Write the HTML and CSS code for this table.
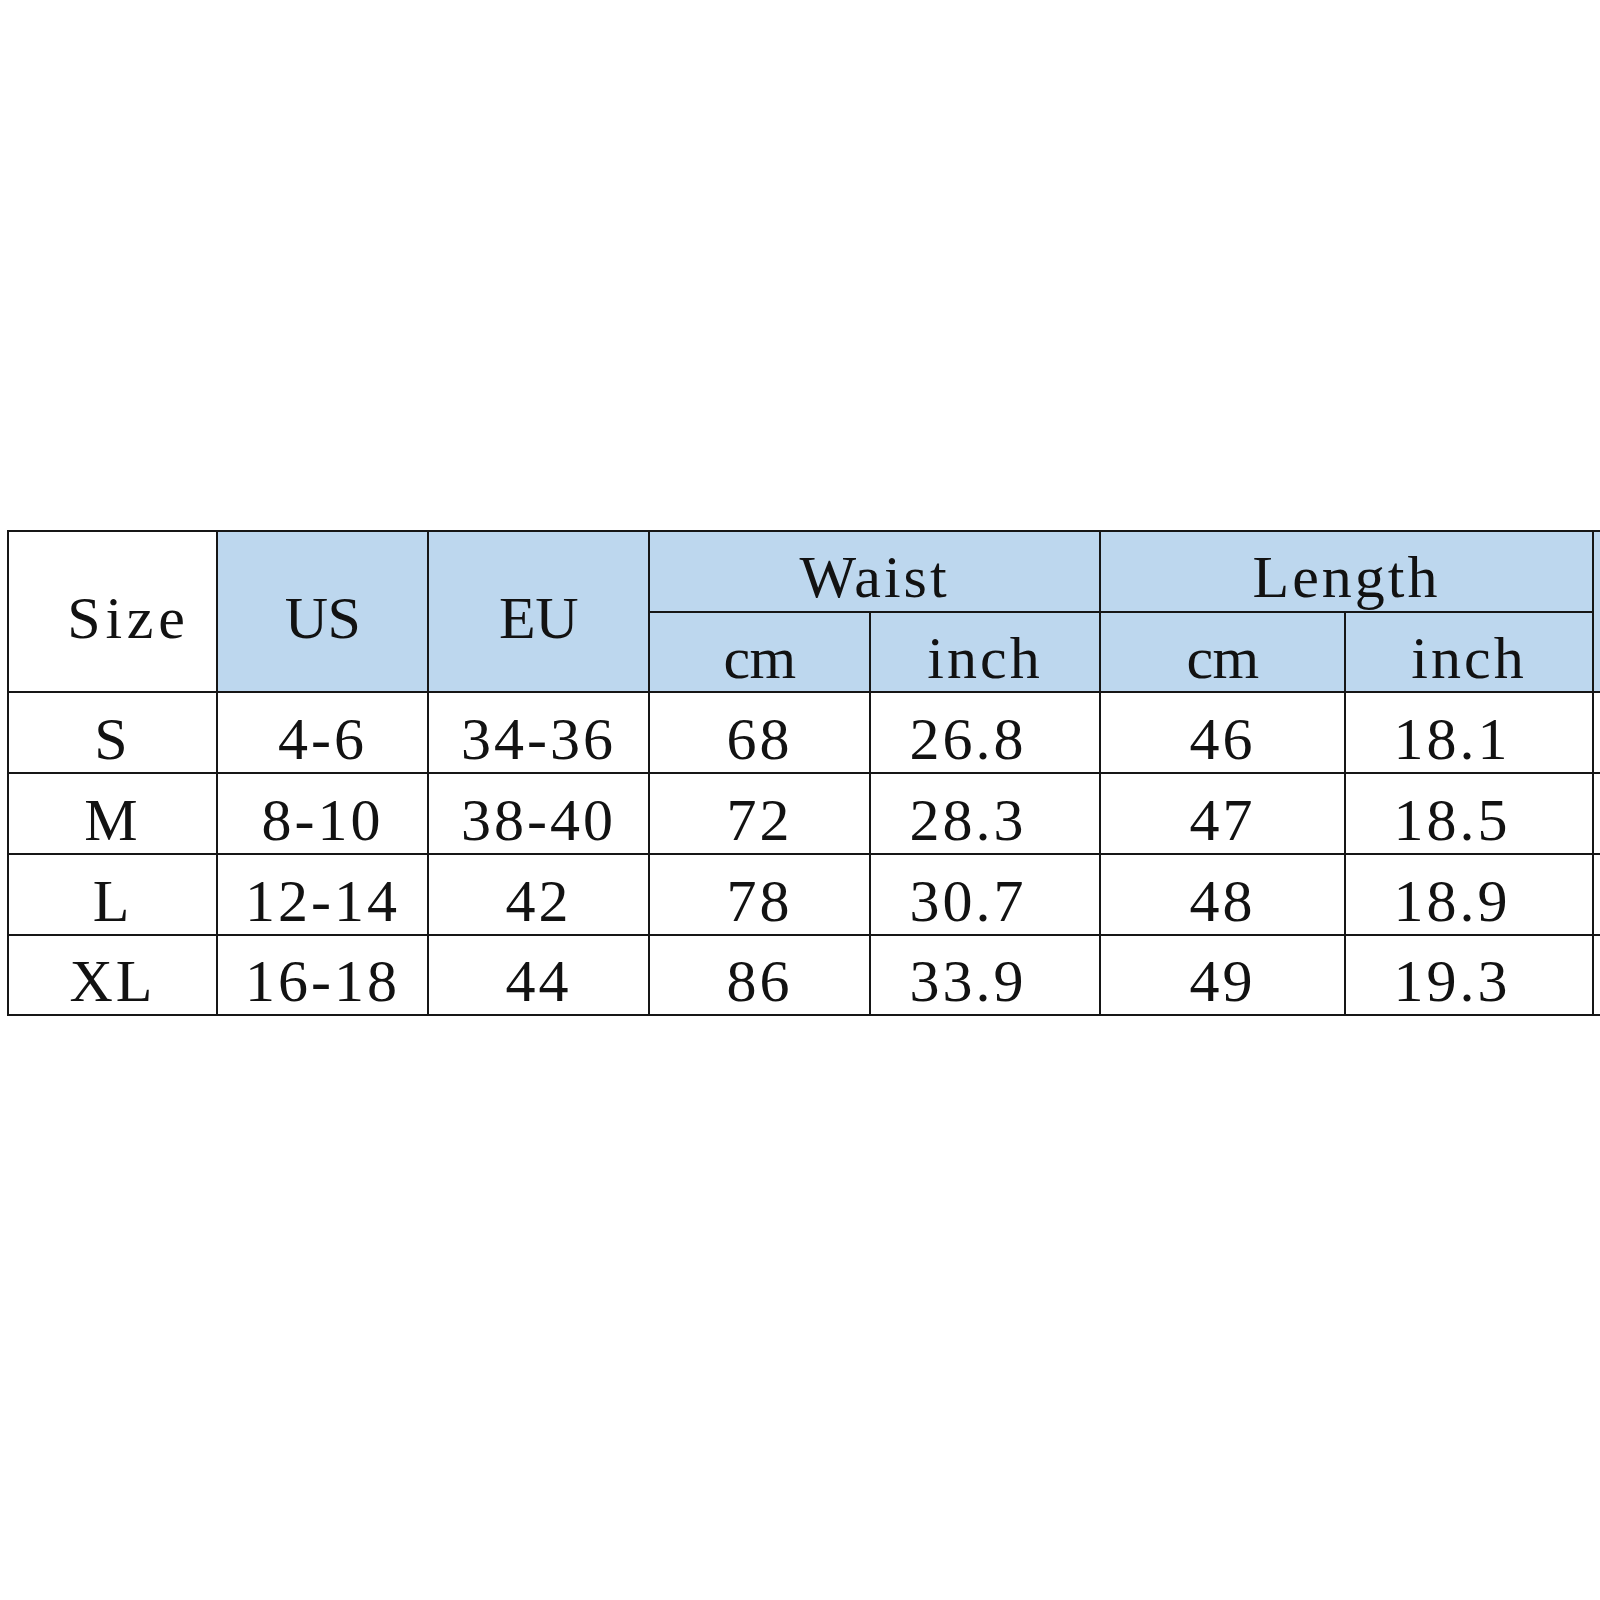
FILE: index.html
```html
<!DOCTYPE html>
<html lang="en">
<head>
<meta charset="utf-8">
<title>Size Chart</title>
<link rel="stylesheet" href="styles.css">
</head>
<body>
<div class="page">
  <div class="chart">
    <div class="cell head tall size">Size</div>
    <div class="cell head tall blue tight">US</div>
    <div class="cell head tall blue tight">EU</div>
    <div class="cell head wide blue">Waist</div>
    <div class="cell head wide blue">Length</div>
    <div class="cell head tall blue"></div>
    <div class="cell blue tight">cm</div>
    <div class="cell blue">inch</div>
    <div class="cell blue tight">cm</div>
    <div class="cell blue">inch</div>

    <div class="cell">S</div>
    <div class="cell">4-6</div>
    <div class="cell">34-36</div>
    <div class="cell">68</div>
    <div class="cell dec">26.8</div>
    <div class="cell">46</div>
    <div class="cell dec">18.1</div>
    <div class="cell"></div>

    <div class="cell">M</div>
    <div class="cell">8-10</div>
    <div class="cell">38-40</div>
    <div class="cell">72</div>
    <div class="cell dec">28.3</div>
    <div class="cell">47</div>
    <div class="cell dec">18.5</div>
    <div class="cell"></div>

    <div class="cell">L</div>
    <div class="cell">12-14</div>
    <div class="cell">42</div>
    <div class="cell">78</div>
    <div class="cell dec">30.7</div>
    <div class="cell">48</div>
    <div class="cell dec">18.9</div>
    <div class="cell"></div>

    <div class="cell">XL</div>
    <div class="cell">16-18</div>
    <div class="cell">44</div>
    <div class="cell">86</div>
    <div class="cell dec">33.9</div>
    <div class="cell">49</div>
    <div class="cell dec">19.3</div>
    <div class="cell"></div>
  </div>
</div>
</body>
</html>
```

FILE: styles.css
```css
html, body {
  margin: 0;
  padding: 0;
  background: #ffffff;
  overflow: hidden;
}

.page {
  width: 1600px;
  height: 1600px;
  padding: 530px 0 0 7px;
  box-sizing: border-box;
  overflow: hidden;
}

.chart {
  display: grid;
  grid-template-columns: 207px 209px 219px 219px 228px 243px 246px 200px;
  grid-template-rows: 79px 78px 79px 79px 79px 78px;
  gap: 2px;
  padding: 2px;
  background: #161616;
  width: max-content;
}

.cell {
  background: #ffffff;
  display: flex;
  align-items: center;
  justify-content: center;
  padding-top: 12px;
  box-sizing: border-box;
  font-family: "Liberation Serif", "Times New Roman", serif;
  font-size: 60px;
  line-height: 60px;
  letter-spacing: 0.05em;
  color: #121212;
  white-space: nowrap;
}

.blue {
  background: #bdd7ee;
}

.tall {
  grid-row: span 2;
}

.wide {
  grid-column: span 2;
  padding-top: 10px;
}

.tight {
  letter-spacing: -0.01em;
}

.size {
  padding-left: 32px;
  letter-spacing: 0.08em;
}

.dec {
  padding-right: 34px;
}
```
